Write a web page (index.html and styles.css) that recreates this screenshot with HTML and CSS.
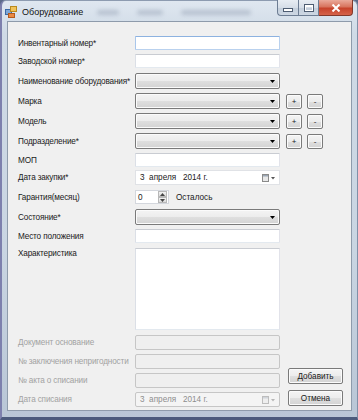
FILE: index.html
```html
<!DOCTYPE html>
<html lang="ru">
<head>
<meta charset="utf-8">
<title>Оборудование</title>
<link rel="stylesheet" href="styles.css">
</head>
<body>
<div class="window">
  <div class="titlebar">
    <svg class="appicon" width="12" height="12" viewBox="0 0 12 12">
      <rect x="0.5" y="3.5" width="6" height="5" fill="#7fa7d6" stroke="#3b6aa5"/>
      <rect x="5.5" y="0.5" width="6" height="5" fill="#f1c35a" stroke="#b98a1e"/>
      <rect x="3.5" y="7.5" width="6" height="4" fill="#e98a45" stroke="#b45a1c"/>
    </svg>
    <span class="title">Оборудование</span>
    <div class="ghosts">
      <span class="ghost g1"></span>
      <span class="ghost g2"></span>
      <span class="ghost g3"></span>
    </div>
    <div class="caption">
      <div class="cbtn cmin"><span class="minbar"></span></div>
      <div class="cbtn cmax"><span class="maxbox"></span></div>
      <div class="cbtn cclose">
        <svg width="10" height="8" viewBox="0 0 10 8"><path d="M1.5 0.5 L8.5 7.5 M8.5 0.5 L1.5 7.5" stroke="#fff" stroke-width="2"/></svg>
      </div>
    </div>
  </div>
  <div class="client">
    <div class="form">
      <div class="lbl">Инвентарный номер*</div>
      <div class="tb focus"></div>

      <div class="lbl">Заводской номер*</div>
      <div class="tb"></div>

      <div class="lbl lbl16">Наименование оборудования*</div>
      <div class="combo"><svg class="arr" width="5" height="3" viewBox="0 0 5 3"><path d="M0 0h5L2.5 3z" fill="#000"/></svg></div>

      <div class="lbl lbl16">Марка</div>
      <div class="combo"><svg class="arr" width="5" height="3" viewBox="0 0 5 3"><path d="M0 0h5L2.5 3z" fill="#000"/></svg></div>
      <div class="pm"><div class="btn sm">+</div><div class="btn sm">-</div></div>

      <div class="lbl lbl16">Модель</div>
      <div class="combo"><svg class="arr" width="5" height="3" viewBox="0 0 5 3"><path d="M0 0h5L2.5 3z" fill="#000"/></svg></div>
      <div class="pm"><div class="btn sm">+</div><div class="btn sm">-</div></div>

      <div class="lbl lbl16">Подразделение*</div>
      <div class="combo"><svg class="arr" width="5" height="3" viewBox="0 0 5 3"><path d="M0 0h5L2.5 3z" fill="#000"/></svg></div>
      <div class="pm"><div class="btn sm">+</div><div class="btn sm">-</div></div>

      <div class="lbl">МОП</div>
      <div class="tb"></div>

      <div class="lbl lbl15">Дата закупки*</div>
      <div class="date">
        <span class="dtext">3  апреля   2014 г.</span>
        <svg class="cal" width="14" height="8" viewBox="0 0 14 8"><rect x="0.5" y="0.5" width="6" height="7" fill="#e8e8e8" stroke="#8a8a8a"/><rect x="1" y="1" width="5" height="1.5" fill="#9aa6b4"/><path d="M9 3h4L11 5.5z" fill="#555"/></svg>
      </div>

      <div class="lbl">Гарантия(месяц)</div>
      <div class="numrow">
        <div class="num">
          <span>0</span>
          <div class="spin">
            <div class="sp"><svg width="5" height="3" viewBox="0 0 5 3"><path d="M0 3h5L2.5 0z" fill="#444"/></svg></div>
            <div class="sp"><svg width="5" height="3" viewBox="0 0 5 3"><path d="M0 0h5L2.5 3z" fill="#444"/></svg></div>
          </div>
        </div>
        <span class="left">Осталось</span>
      </div>

      <div class="lbl lbl16">Состояние*</div>
      <div class="combo"><svg class="arr" width="5" height="3" viewBox="0 0 5 3"><path d="M0 0h5L2.5 3z" fill="#000"/></svg></div>

      <div class="lbl">Место положения</div>
      <div class="tb"></div>

      <div class="lbl top">Характеристика</div>
      <div class="area"></div>

      <div class="lbl dis">Документ основание</div>
      <div class="tb off"></div>

      <div class="lbl dis">№ заключения непригодности</div>
      <div class="tb off"></div>

      <div class="lbl dis">№ акта о списании</div>
      <div class="tb off"></div>

      <div class="lbl dis lbl15">Дата списания</div>
      <div class="date off">
        <span class="dtext">3  апреля   2014 г.</span>
        <svg class="cal" width="14" height="8" viewBox="0 0 14 8"><rect x="0.5" y="0.5" width="6" height="7" fill="#eeeeee" stroke="#bdbdbd"/><rect x="1" y="1" width="5" height="1.5" fill="#d0d4da"/><path d="M9 3h4L11 5.5z" fill="#b5b5b5"/></svg>
      </div>

      <div class="actions">
        <div class="btn big">Добавить</div>
        <div class="btn big">Отмена</div>
      </div>
    </div>
  </div>
</div>
</body>
</html>
```
FILE: styles.css
```css
* { box-sizing: border-box; }
html, body { margin: 0; padding: 0; }
body {
  width: 358px;
  height: 420px;
  overflow: hidden;
  background: #5c6b8a;
  font-family: "Liberation Sans", Arial, sans-serif;
  font-size: 8.2px;
  color: #1a1a1a;
}
.window {
  width: 358px;
  height: 420px;
  display: flex;
  flex-direction: column;
  background: linear-gradient(180deg, #dfe7f0 0%, #cfdae6 8%, #c9d5e2 60%, #b9c6d6 100%);
  border-left: 2px solid #7d80ad;
  border-bottom: 3px solid #4b5a7c;
  border-top: 1px solid #8d9bb0;
  border-right: 1px solid #8090a8;
  border-radius: 6px 6px 0 0;
}
.titlebar {
  height: 20px;
  display: flex;
  align-items: flex-start;
  padding: 4px 0 0 3px;
}
.appicon { flex: none; margin-top: 1px; }
.title {
  margin-left: 5px;
  margin-top: 2px;
  font-size: 9px;
  color: #111;
}
.ghosts {
  display: flex;
  align-items: center;
  margin-left: 14px;
  margin-top: 5px;
  gap: 18px;
}
.ghost {
  display: block;
  height: 5px;
  background: #9aa6b8;
  filter: blur(2px);
  opacity: 0.55;
  border-radius: 3px;
}
.g1 { width: 22px; }
.g2 { width: 26px; }
.g3 { width: 70px; }
.caption {
  margin-left: auto;
  margin-right: 4px;
  margin-top: -5px;
  display: flex;
}
.cbtn {
  height: 16px;
  display: flex;
  align-items: center;
  justify-content: center;
  border: 1px solid #6d7d93;
  border-top: none;
}
.cmin {
  width: 21px;
  border-radius: 0 0 0 4px;
  background: linear-gradient(180deg, #e8edf3 0%, #d6dee8 50%, #c3cedb 51%, #cdd7e3 100%);
  border-right: none;
}
.cmax {
  width: 21px;
  background: linear-gradient(180deg, #e8edf3 0%, #d6dee8 50%, #c3cedb 51%, #cdd7e3 100%);
}
.cclose {
  width: 34px;
  border-left: none;
  border-radius: 0 0 4px 0;
  background: linear-gradient(180deg, #eaa99a 0%, #d8745e 45%, #c7432b 55%, #d5634a 100%);
  border-color: #83392b;
}
.minbar {
  display: block;
  width: 8px;
  height: 2px;
  margin-top: 4px;
  background: #fff;
  box-shadow: 0 0 0 1px #4e5d72;
}
.maxbox {
  display: block;
  width: 8px;
  height: 6px;
  border: 1px solid #fff;
  border-top-width: 2px;
  box-shadow: 0 0 0 1px #4e5d72;
}
.client {
  flex: 1;
  margin: 0 5px 6px 5px;
  background: #f0f0f0;
  border: 1px solid #8e9bab;
}
.form {
  display: grid;
  grid-template-columns: 117px 145px auto;
  grid-template-rows: 18px 19px 20px 20px 20px 20px 17px 20px 19px 20px 19px 87px 19px 19px 19px 15px;
  padding: 14px 0 0 10px;
}
.lbl {
  grid-column: 1;
  height: 14px;
  display: flex;
  align-items: center;
  white-space: nowrap;
  letter-spacing: -0.15px;
}
.lbl16 { height: 16px; }
.lbl15 { height: 15px; }
.lbl.top { align-items: flex-start; padding-top: 1px; }
.lbl.dis { color: #a2a2a2; }
.tb, .combo, .date, .numrow, .area { grid-column: 2; }
.tb {
  height: 14px;
  background: #fff;
  border: 1px solid;
  border-color: #c9ccd2 #e2e3ea #e3e9ef #dbdfe6;
  border-radius: 1px;
}
.tb.focus { border-color: #8db2e0 #b9d1ee #b9d1ee #a9c6ea; }
.tb.off {
  background: #efefef;
  border: 1px solid #c6c6c6;
  border-radius: 2px;
  height: 15px;
}
.combo {
  height: 16px;
  border: 1px solid #7a7a7a;
  border-radius: 2px;
  background: linear-gradient(180deg, #f4f4f4 0%, #ececec 50%, #dfdfdf 51%, #d3d3d3 100%);
  box-shadow: inset 0 0 0 1px #fbfbfb;
  display: flex;
  align-items: center;
  justify-content: flex-end;
  padding-right: 4px;
}
.pm {
  grid-column: 3;
  display: flex;
  gap: 5px;
  margin-left: 6px;
  margin-top: 1px;
}
.btn {
  border: 1px solid #7a7a7a;
  border-radius: 2px;
  background: linear-gradient(180deg, #f4f4f4 0%, #ececec 50%, #dfdfdf 51%, #d3d3d3 100%);
  box-shadow: inset 0 0 0 1px #fbfbfb;
  display: flex;
  align-items: center;
  justify-content: center;
  color: #1a1a1a;
}
.btn.sm {
  width: 16px;
  height: 15px;
  font-size: 8px;
  line-height: 1;
}
.date {
  height: 15px;
  background: #fff;
  border: 1px solid #e0e2e6;
  display: flex;
  align-items: center;
  padding-left: 4px;
  padding-right: 3px;
}
.dtext { white-space: pre; }
.cal { margin-left: auto; }
.date.off {
  background: #f4f4f4;
  border: 1px solid #c6c6c6;
  border-radius: 2px;
  color: #8e8e8e;
}
.numrow {
  display: flex;
  align-items: center;
  height: 14px;
}
.num {
  width: 34px;
  height: 14px;
  background: #fff;
  border: 1px solid #d4d7dd;
  display: flex;
  align-items: center;
  padding-left: 2px;
}
.spin {
  margin-left: auto;
  width: 9px;
  height: 12px;
  display: flex;
  flex-direction: column;
  margin-right: 1px;
}
.sp {
  flex: 1;
  display: flex;
  align-items: center;
  justify-content: center;
  background: linear-gradient(180deg, #f3f3f3, #dcdcdc);
  border: 1px solid #b8b8b8;
}
.left { margin-left: 7px; }
.area {
  height: 82px;
  background: #fff;
  border: 1px solid;
  border-color: #c9ccd2 #e2e3ea #e3e9ef #dbdfe6;
}
.actions {
  grid-column: 3;
  grid-row: 14 / span 3;
  display: flex;
  flex-direction: column;
  justify-content: flex-end;
  gap: 6px;
  margin-left: 8px;
  padding-bottom: 1px;
}
.btn.big {
  width: 55px;
  height: 16px;
}
```
